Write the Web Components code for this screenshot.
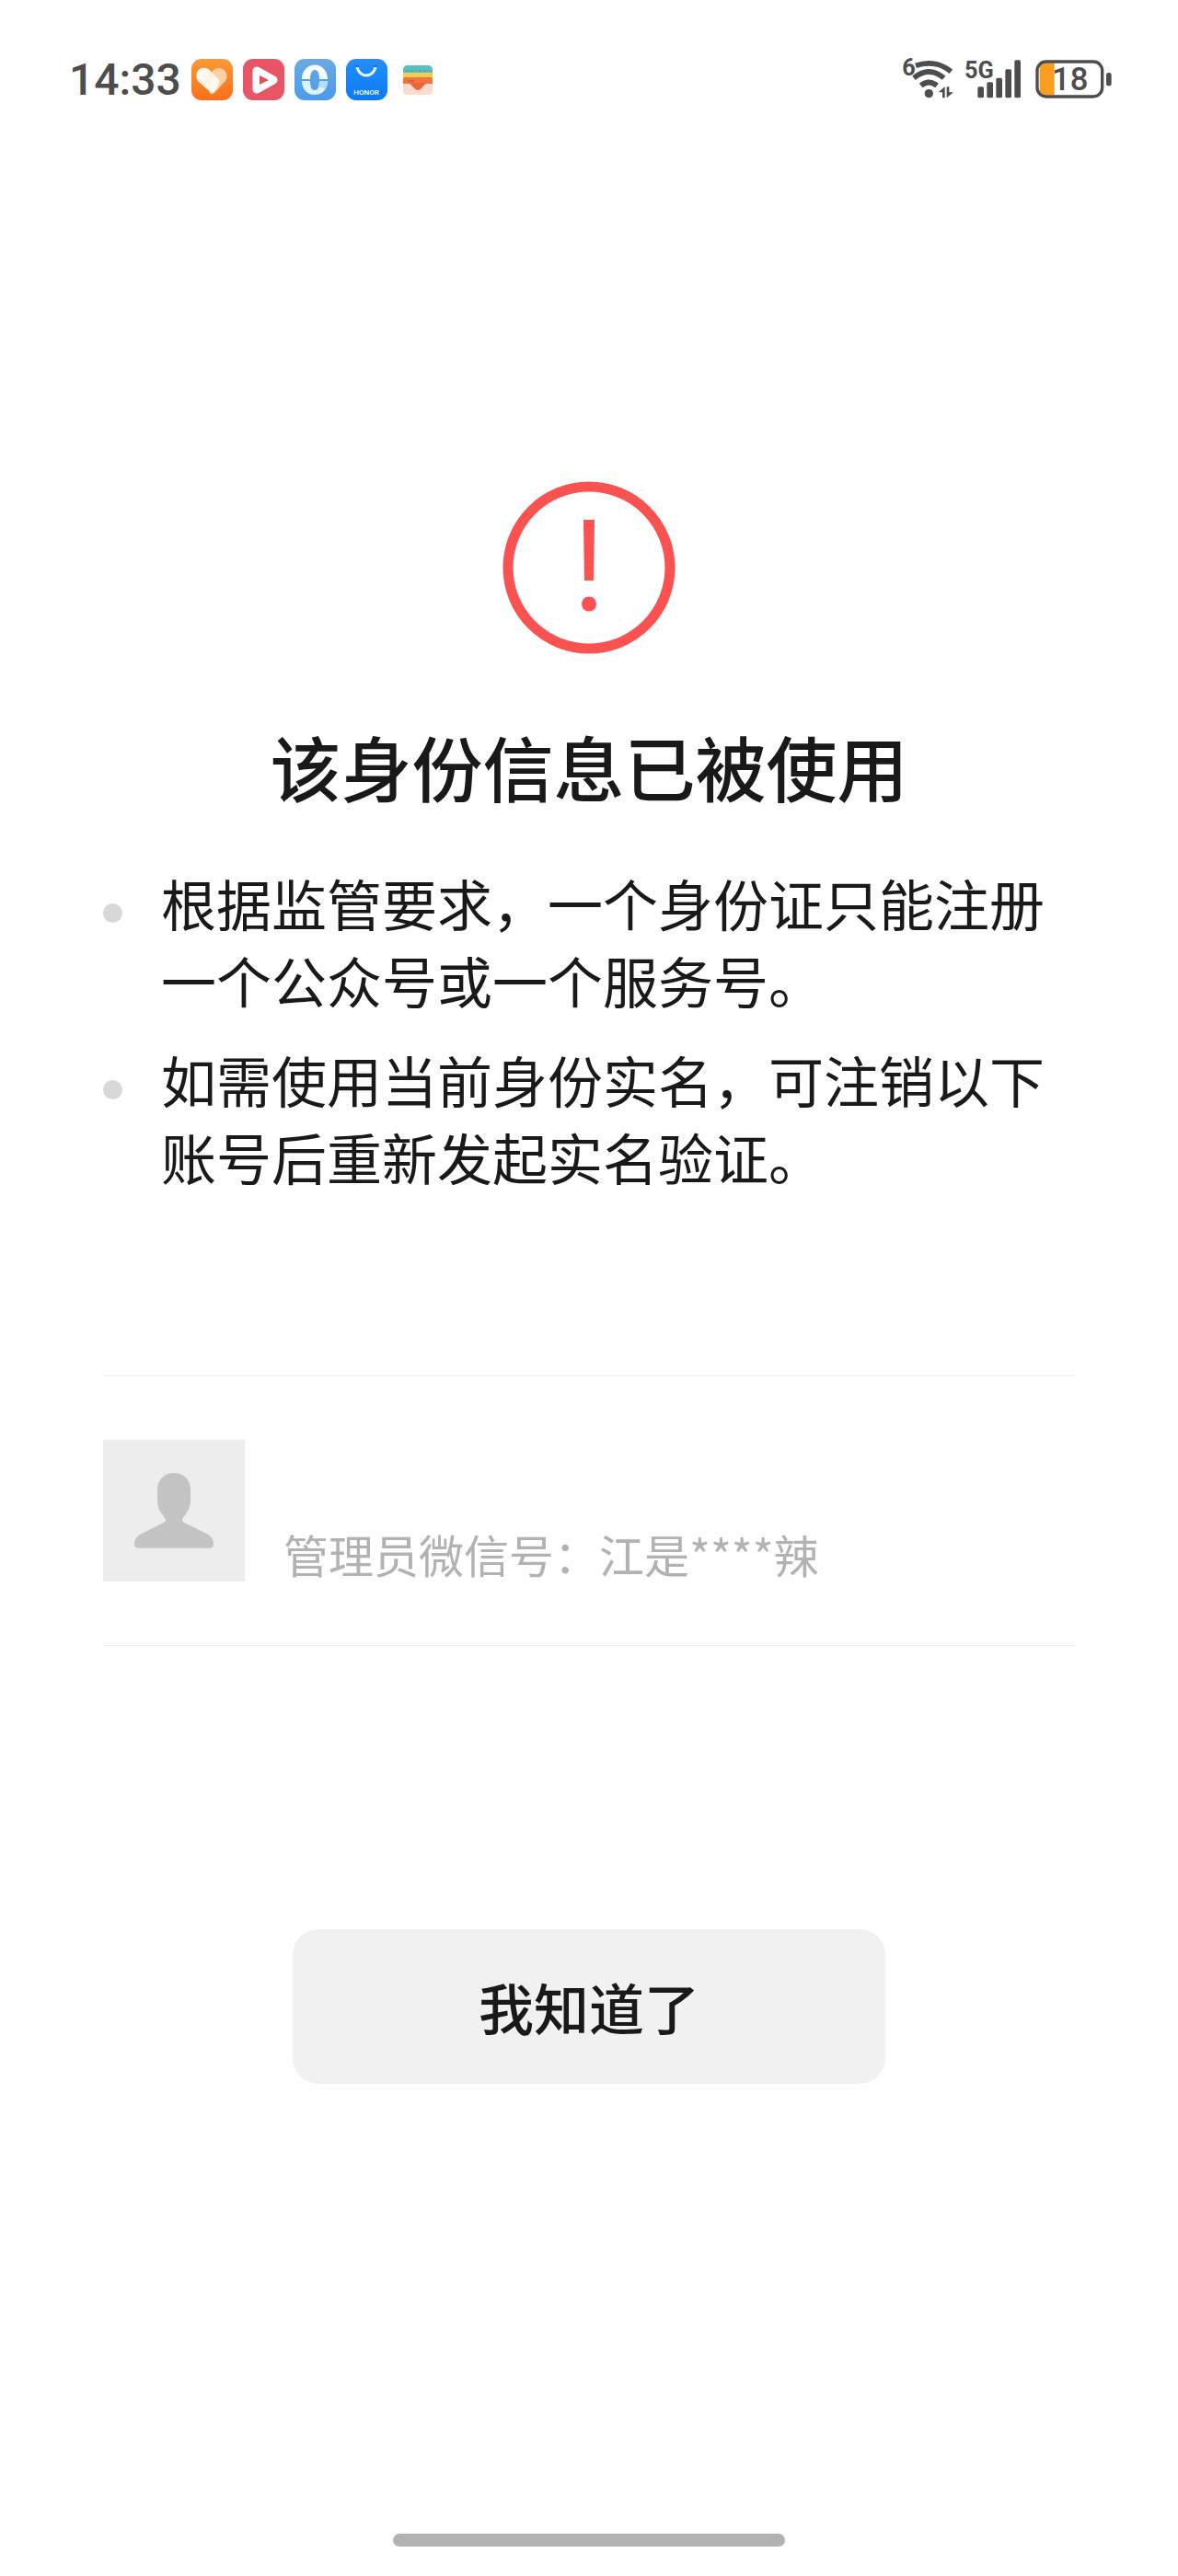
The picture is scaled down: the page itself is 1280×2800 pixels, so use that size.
<!DOCTYPE html>
<html lang="zh-CN">
<head>
<meta charset="utf-8">
<meta name="viewport" content="width=device-width, initial-scale=1">
<title>该身份信息已被使用</title>
<style>
  body {
    margin: 0;
    min-height: 100vh;
    display: flex;
    flex-direction: column;
    background: #fefefe;
    color: #191919;
    font-family: "Noto Sans CJK SC", sans-serif;
  }
  result-page { flex: 1; }
</style>
</head>
<body>
  <status-bar time="14:33" battery="18"></status-bar>

  <result-page>
    <warn-icon slot="icon"></warn-icon>
    <span slot="title">该身份信息已被使用</span>
    <notice-item>根据监管要求，一个身份证只能注册一个公众号或一个服务号。</notice-item>
    <notice-item>如需使用当前身份实名，可注销以下账号后重新发起实名验证。</notice-item>
    <account-card slot="account">管理员微信号：江是****辣</account-card>
    <action-button slot="action">我知道了</action-button>
  </result-page>

  <home-indicator></home-indicator>

<script>
  class StatusBar extends HTMLElement {
    constructor() {
      super();
      this.attachShadow({ mode: 'open' });
      this.shadowRoot.innerHTML = `
        <style>
          :host {
            display: flex;
            justify-content: space-between;
            padding: 64px 72px 0 75px;
            color: #4d4d4d;
            font-family: Roboto, sans-serif;
            line-height: 45px;
          }
          .side { display: flex; align-items: center; height: 45px; }
          .apps { gap: 11px; }
          .system { gap: 12px; }
          time { font-size: 48px; font-weight: 500; }
          svg { display: block; flex: none; }
          text { font-family: Roboto, sans-serif; }
          .net { font: bold 76px "Liberation Sans Narrow", Roboto, sans-serif; }
        </style>
        <div class="side apps">
          <time></time>
          <!-- health -->
          <svg width="45" height="45" viewBox="0 0 45 45" aria-hidden="true">
            <defs>
              <linearGradient id="or" x1="0" y1="0" x2="0" y2="1"><stop offset="0" stop-color="#f99a35"/><stop offset="1" stop-color="#fb6f1c"/></linearGradient>
              <linearGradient id="hw" x1="0" y1="0" x2="1" y2="1"><stop offset="0" stop-color="#fff"/><stop offset=".5" stop-color="#fff3e4"/><stop offset="1" stop-color="#fff"/></linearGradient>
            </defs>
            <rect width="45" height="45" rx="11" fill="url(#or)"/>
            <path d="M22.500 14c3-4.500 9-5.500 13-2 4 4 4 9 .5 13L25.500 36.500c-2 2-4 2-6 0z" fill="#fcd0a0"/>
            <path d="M5.500 18c0-6 5-9 10-8 3 .5 5 2.500 7 5l7 7c1.500 2 1.500 4 0 6l-5 8c-1.500 1.500-3 1-4 0L8 25c-2-2-2.500-4-2.500-7z" fill="url(#hw)"/>
          </svg>
          <!-- video -->
          <svg width="45" height="45" viewBox="0 0 45 45" aria-hidden="true">
            <rect width="45" height="45" rx="11" fill="#e75567"/>
            <path d="M15 13v20l18-10z" fill="none" stroke="#fff" stroke-width="9" stroke-linejoin="round"/>
            <path d="M18 18v10l10-5z" fill="#e0505f"/>
          </svg>
          <!-- phone clone -->
          <svg width="45" height="45" viewBox="0 0 45 45" aria-hidden="true">
            <defs><linearGradient id="lb" x1="0" y1="0" x2="0" y2="1"><stop offset="0" stop-color="#6baae2"/><stop offset="1" stop-color="#4a9bea"/></linearGradient></defs>
            <rect width="45" height="45" rx="11" fill="url(#lb)"/>
            <path d="M8 22c0-9 6-15.500 14-15.500S36 13 36 22h-9c0-5-1-10-5-10-3 0-5 4-5 10z" fill="#f6fdff"/>
            <path d="M8 24c0 9 6 15 14 15s14-6 14-15h-9c0 5-1 10-5 10s-5-5-5-10z" fill="#dcf3fd"/>
            <path d="M27 24h9c0 3-1 6-3 9-4-3-8-3-9 0 2-2 3-5 3-9z" fill="#b4ddf8"/>
          </svg>
          <!-- app store -->
          <svg width="45" height="45" viewBox="0 0 45 45" role="img" aria-label="HONOR">
            <defs><linearGradient id="bl" x1="0" y1="0" x2="0" y2="1"><stop offset="0" stop-color="#2390fa"/><stop offset="1" stop-color="#0c78f6"/></linearGradient></defs>
            <rect width="45" height="45" rx="11" fill="url(#bl)"/>
            <path d="M12 9c1 5 5 9 10 9s9-4 10-9" fill="none" stroke="#e9fbff" stroke-width="3"/>
            <path d="M10 8h4m16 0h4" stroke="#0959b4" stroke-width="1"/>
            <text x="22" y="39" text-anchor="middle" font-size="8" font-weight="500" fill="#fff">HONOR</text>
          </svg>
          <!-- wallet -->
          <svg width="45" height="45" viewBox="0 0 45 45" aria-hidden="true">
            <path d="M6 17V12c0-3 2-5 5-5h22c3 0 5 2 5 5v5z" fill="#5bbfc0"/>
            <path d="M10 12v2m3-2v1m3-1v2m4-2v1m4-1v2m3-2v1m3-1v2m4-2v1" stroke="#3c8f94" stroke-width="1"/>
            <path d="M6 15h32v9H6z" fill="#f9cb51"/>
            <path d="M6 22c0-1 1-2 2-2h28c1 0 2 1 2 2v8H6z" fill="#f0763f"/>
            <path d="M6 27h6c4 0 5 7 10 7s6-7 10-7h6v8c0 2-2 4-4 4H10c-2 0-4-2-4-4z" fill="#fbdcd0"/>
            <path d="M11 26c5 0 6 8 11 8s6-8 11-8z" fill="#e9683a"/>
            <path d="M11 24h7" stroke="#b8502c" stroke-width="1"/>
          </svg>
        </div>
        <div class="side system">
          <svg width="57" height="57" viewBox="-4 -18 171 171" fill="#4d4d4d" role="img" aria-label="Wi-Fi 6">
            <text class="net" x="0" y="53">6</text>
            <g fill="none" stroke="#4d4d4d" stroke-width="17">
              <path d="M44 22q62-22 115 19"/>
              <path d="M38 62q50-40 98 0"/>
              <path d="M61 87q26-21 52 0"/>
            </g>
            <circle cx="87" cy="113" r="14"/>
            <path d="M139 91v36h-8v-18h-13zM145 91h8v18h14l-22 18z"/>
          </svg>
          <svg width="65" height="57" viewBox="0 -18 195 171" fill="#4d4d4d" role="img" aria-label="5G">
            <text class="net" x="0" y="62">5G</text>
            <rect x="43" y="91" width="20" height="36" rx="5"/>
            <rect x="73" y="76" width="20" height="51" rx="5"/>
            <rect x="103" y="62" width="20" height="65" rx="5"/>
            <rect x="133" y="34" width="20" height="93" rx="5"/>
            <rect x="163" y="4" width="20" height="123" rx="5"/>
          </svg>
          <svg width="83" height="45" viewBox="0 0 249 135" fill="#4d4d4d">
            <path d="M62 14v104H34q-20 0-20-20V34q0-20 20-20z" fill="#fb9d1e"/>
            <rect x="6" y="9" width="212" height="114" rx="29" fill="none" stroke="#4d4d4d" stroke-width="10"/>
            <rect x="231" y="45" width="17" height="43" rx="8"/>
            <text class="level" x="113" y="103" font-size="104" font-weight="500" text-anchor="middle"></text>
          </svg>
        </div>
      `;
    }

    connectedCallback() {
      this.shadowRoot.querySelector('time').textContent = this.getAttribute('time');
      this.shadowRoot.querySelector('.level').textContent = this.getAttribute('battery');
    }
  }

  class WarnIcon extends HTMLElement {
    constructor() {
      super();
      this.attachShadow({ mode: 'open' });
      this.shadowRoot.innerHTML = `
        <style>
          :host { display: block; }
          svg { display: block; }
        </style>
        <svg width="188" height="188" viewBox="0 0 188 188" fill="#fa5151" aria-hidden="true">
          <circle cx="94" cy="94" r="88" fill="none" stroke="#fa5151" stroke-width="11"/>
          <path d="M88 42h12l-1 66H89z"/>
          <circle cx="94" cy="133.500" r="8"/>
        </svg>
      `;
    }
  }

  class ResultPage extends HTMLElement {
    constructor() {
      super();
      this.attachShadow({ mode: 'open' });
      this.shadowRoot.innerHTML = `
        <style>
          :host { display: block; padding: 414px 112px 0; }
          main { display: flex; flex-direction: column; align-items: center; }
          h1 {
            margin: 72px 0 56px;
            font-size: 77px;
            font-weight: 500;
            line-height: 100px;
            text-align: center;
          }
          .notices {
            display: flex;
            flex-direction: column;
            gap: 24px;
            width: 100%;
          }
          .account { width: 100%; margin: 196px 0 308px; }
        </style>
        <main>
          <slot name="icon"></slot>
          <h1><slot name="title"></slot></h1>
          <div class="notices" role="list"><slot></slot></div>
          <div class="account"><slot name="account"></slot></div>
          <slot name="action"></slot>
        </main>
      `;
    }
  }

  class NoticeItem extends HTMLElement {
    constructor() {
      super();
      this.attachShadow({ mode: 'open' });
      this.shadowRoot.innerHTML = `
        <style>
          :host {
            display: flex;
            align-items: flex-start;
            gap: 42px;
            font-size: 60px;
            line-height: 84px;
          }
          .dot {
            flex: none;
            width: 21px;
            height: 21px;
            margin-top: 43px;
            border-radius: 50%;
            background: #d8d8d8;
          }
        </style>
        <span class="dot"></span>
        <div><slot></slot></div>
      `;
    }

    connectedCallback() {
      this.setAttribute('role', 'listitem');
    }
  }

  class AccountCard extends HTMLElement {
    constructor() {
      super();
      this.attachShadow({ mode: 'open' });
      this.shadowRoot.innerHTML = `
        <style>
          :host {
            display: flex;
            align-items: flex-end;
            gap: 42px;
            padding: 69px 0;
            border: 1px solid #ebebeb;
            border-width: 1px 0;
            color: #b2b2b2;
            font-size: 49px;
            line-height: 60px;
          }
          svg { display: block; flex: none; background: #ededed; }
        </style>
        <svg width="154" height="154" viewBox="0 0 462 462" aria-hidden="true">
          <path d="M231 108c-32 0-54 23-54 55v37c0 23 12 38 24 54q7 10-2 15l-72 36c-17 8-25 20-25 36 0 8 5 12 12 12h234c8 0 12-5 12-13 0-16-8-27-24-35l-73-36q-9-6-3-14c13-16 25-32 25-56v-36c0-32-22-55-54-55z" fill="#c4c4c4"/>
        </svg>
        <div><slot></slot></div>
      `;
    }
  }

  class ActionButton extends HTMLElement {
    constructor() {
      super();
      this.attachShadow({ mode: 'open' });
      this.shadowRoot.innerHTML = `
        <style>
          :host { display: block; }
          button {
            min-width: 644px;
            padding: 42px 60px;
            border: 0;
            border-radius: 28px;
            background: #f1f1f1;
            color: inherit;
            font: inherit;
            font-size: 60px;
            font-weight: 500;
            line-height: 84px;
          }
        </style>
        <button type="button"><slot></slot></button>
      `;
    }
  }

  class HomeIndicator extends HTMLElement {
    constructor() {
      super();
      this.attachShadow({ mode: 'open' });
      this.shadowRoot.innerHTML = `
        <style>
          :host { display: flex; justify-content: center; padding: 32px 0; }
          span { width: 426px; height: 14px; border-radius: 7px; background: #b2b2b2; }
        </style>
        <span></span>
      `;
    }
  }

  customElements.define('status-bar', StatusBar);
  customElements.define('warn-icon', WarnIcon);
  customElements.define('result-page', ResultPage);
  customElements.define('notice-item', NoticeItem);
  customElements.define('account-card', AccountCard);
  customElements.define('action-button', ActionButton);
  customElements.define('home-indicator', HomeIndicator);
</script>
</body>
</html>
